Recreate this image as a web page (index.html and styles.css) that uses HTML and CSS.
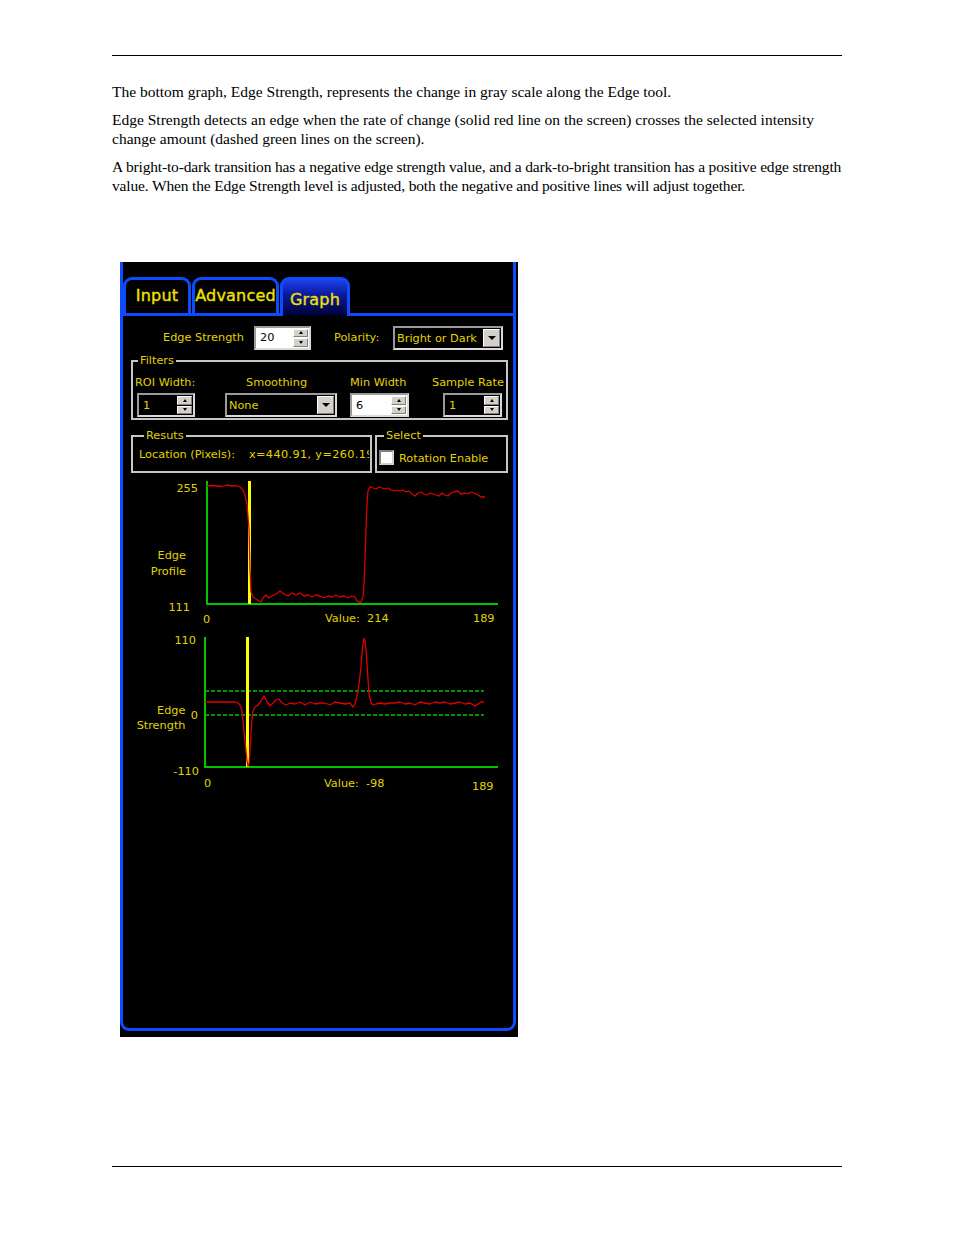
FILE: index.html
```html
<!DOCTYPE html>
<html>
<head>
<meta charset="utf-8">
<title>Edge Strength</title>
<link rel="stylesheet" href="styles.css">
</head>
<body>
<div class="page">
  <div class="rule top"></div>
  <div class="text">
    <p>The bottom graph, Edge Strength, represents the change in gray scale along the Edge tool.</p>
    <p>Edge Strength detects an edge when the rate of change (solid red line on the screen) crosses the selected intensity<br>change amount (dashed green lines on the screen).</p>
    <p class="tight">A bright-to-dark transition has a negative edge strength value, and a dark-to-bright transition has a positive edge strength<br>value. When the Edge Strength level is adjusted, both the negative and positive lines will adjust together.</p>
  </div>

  <div class="panel">
    <div class="frame">
      <div class="tabs">
        <div class="tab t-input">Input</div>
        <div class="tab t-adv">Advanced</div>
        <div class="tab t-graph">Graph</div>
      </div>

      <div class="row1">
        <span class="lbl l-es">Edge Strength</span>
        <div class="spin white w-es"><span class="val">20</span><span class="btns"><span class="b up"></span><span class="b dn"></span></span></div>
        <span class="lbl l-pol">Polarity:</span>
        <div class="combo w-pol"><span class="val">Bright or Dark</span><span class="arrow"></span></div>
      </div>

      <fieldset class="grp filters">
        <legend>Filters</legend>
        <div class="fcols">
          <div class="fcol c1">
            <span class="lbl">ROI Width:</span>
            <div class="spin"><span class="val">1</span><span class="btns"><span class="b up"></span><span class="b dn"></span></span></div>
          </div>
          <div class="fcol c2">
            <span class="lbl">Smoothing</span>
            <div class="combo"><span class="val">None</span><span class="arrow"></span></div>
          </div>
          <div class="fcol c3">
            <span class="lbl">Min Width</span>
            <div class="spin white"><span class="val">6</span><span class="btns"><span class="b up"></span><span class="b dn"></span></span></div>
          </div>
          <div class="fcol c4">
            <span class="lbl">Sample Rate</span>
            <div class="spin"><span class="val">1</span><span class="btns"><span class="b up"></span><span class="b dn"></span></span></div>
          </div>
        </div>
      </fieldset>

      <div class="row3">
        <fieldset class="grp results">
          <legend>Resuts</legend>
          <div class="loc"><span class="loc-l">Location (Pixels):</span><span class="loc-v">x=440.91, y=260.19</span></div>
        </fieldset>
        <fieldset class="grp select">
          <legend>Select</legend>
          <div class="chk"><span class="box"></span><span>Rotation Enable</span></div>
        </fieldset>
      </div>

      <svg class="graphs" width="390" height="330" viewBox="123 476 390 330" xmlns="http://www.w3.org/2000/svg">
        <!-- Edge Profile graph -->
        <line class="axis" x1="207" y1="482" x2="207" y2="606"/>
        <line class="axis" x1="206" y1="605" x2="498" y2="605"/>
        <rect class="marker" x="248" y="482" width="3" height="123"/>
        <polyline class="curve" points="207,487 212,486.5 217,487 222,487.5 227,486 232,487 236,486.5 240,488 243,491 245,496 247,505 249,530 250,570 251,593 253,598 256,600 259,602 261,603 263,599 266,596 269,599 272,597 276,595 280,592 284,595 288,597 292,594 296,596 300,594 304,597 308,596 312,598 316,596 320,597 324,599 328,597 332,598 336,596 340,598 344,597 348,599 352,597 355,598 357,602 359,603.5 361,603 363,598 364,585 365,560 366,530 367,505 368,492 370,487.5 373,489 376,490 379,488 382,489 385,490 388,489 391,491 394,492 397,491 400,492 403,491 406,493 409,492 412,495 415,497 418,494 421,493 424,495 427,496 430,494 433,495 436,496 439,497 442,494 445,496 448,497 451,494 454,493 458,492 461,495 465,494 468,495 471,493 474,494 478,496 481,498 485,498"/>
        <text class="t" x="198" y="493" text-anchor="end">255</text>
        <text class="t" x="186" y="560" text-anchor="end">Edge</text>
        <text class="t" x="186" y="576" text-anchor="end">Profile</text>
        <text class="t" x="190" y="612" text-anchor="end">111</text>
        <text class="t" x="203" y="624">0</text>
        <text class="t pre" x="325" y="623">Value:  214</text>
        <text class="t" x="473" y="623">189</text>

        <!-- Edge Strength graph -->
        <line class="axis" x1="205" y1="638" x2="205" y2="769"/>
        <line class="axis" x1="204" y1="768" x2="498" y2="768"/>
        <line class="dash" x1="205" y1="692" x2="484" y2="692"/>
        <line class="dash" x1="205" y1="716" x2="484" y2="716"/>
        <rect class="marker" x="246" y="638" width="3" height="130"/>
        <polyline class="curve" points="205,703 215,703 225,703 235,703 238,704 240,706 242,712 243,722 244,732 245,742 246,752 247,762 248,767 249,765 250,752 251,735 252,720 253,712 255,708 258,706 261,702 264,697 267,703 270,707 273,704 276,701 279,700 282,704 286,706 290,704 295,705 300,703 305,706 310,703 315,705 320,704 325,704 330,706 335,703 340,704 345,705 350,704 353,708 355,705 357,697 359,685 361,668 362,655 363,645 364,639.5 365,641 366,650 367,665 368,680 369,695 371,704 373,706 376,705 380,704 385,705 390,704 395,704 400,703 405,705 410,704 415,706 420,703 425,704 430,705 435,703 440,704 445,703 450,705 455,704 460,703 465,705 470,704 475,707 478,705 481,703 484,703"/>
        <text class="t" x="196" y="645" text-anchor="end">110</text>
        <text class="t" x="185.5" y="715" text-anchor="end">Edge</text>
        <text class="t" x="185.5" y="730" text-anchor="end">Strength</text>
        <text class="t" x="198" y="720" text-anchor="end">0</text>
        <text class="t" x="199" y="776" text-anchor="end">-110</text>
        <text class="t" x="204" y="788">0</text>
        <text class="t pre" x="324" y="788">Value:  -98</text>
        <text class="t" x="472" y="791">189</text>
      </svg>
    </div>
  </div>

  <div class="rule bottom"></div>
</div>
</body>
</html>
```

FILE: styles.css
```css
* { box-sizing: border-box; }

body {
  margin: 0;
  background: #ffffff;
}

.page {
  width: 954px;
}

.rule {
  height: 1px;
  width: 730px;
  margin-left: 112px;
  background: #000000;
}
.rule.top { margin-top: 55px; }
.rule.bottom { margin-top: 129px; }

.text {
  margin-left: 112px;
  width: 780px;
  padding-top: 26px;
  font-family: "Liberation Serif", "Times New Roman", serif;
  font-size: 15.5px;
  line-height: 19px;
  color: #000000;
}
.text p { margin: 0 0 9px; }
.text p:last-child { margin-bottom: 0; }
.text p.first { letter-spacing: 0.05px; }
.text p.tight { letter-spacing: -0.16px; }

/* ---------- panel ---------- */
.panel {
  margin-left: 120px;
  margin-top: 67px;
  width: 398px;
  height: 775px;
  background: #000000;
  font-family: "DejaVu Sans", "Liberation Sans", sans-serif;
  font-size: 11.3px;
  color: #e0d400;
}

.frame {
  width: 396px;
  height: 769px;
  border-left: 3px solid #0c4cfc;
  border-right: 3px solid #0c4cfc;
  border-bottom: 3px solid #0c4cfc;
  border-radius: 0 0 9px 9px;
  display: flex;
  flex-direction: column;
}

.tabs {
  display: flex;
  align-items: flex-end;
  height: 54px;
  border-bottom: 3px solid #0c4cfc;
}

.tab {
  height: 36px;
  border: 3px solid #0c4cfc;
  border-bottom: 0;
  border-radius: 9px 9px 0 0;
  background: #000000;
  display: flex;
  align-items: center;
  justify-content: center;
  font-size: 16px;
  color: #f0e200;
  -webkit-text-stroke: 0.35px #f0e200;
  letter-spacing: 0.2px;
}
.t-input { width: 68px; padding-bottom: 2px; }
.t-adv { width: 87px; margin-left: 1px; padding-bottom: 2px; }
.t-graph {
  width: 70px;
  margin-left: 1px;
  height: 39px;
  margin-bottom: -3px;
  padding-top: 3px;
  background: linear-gradient(#1e40e8 0%, #0a1aa0 40%, #000030 100%);
}

.lbl {
  line-height: 14px;
  white-space: nowrap;
}

/* row 1 */
.row1 {
  display: flex;
  align-items: center;
  height: 25px;
  margin-top: 9px;
}
.l-es { width: 91px; margin-left: 40px; }
.w-es { width: 57px; height: 22px; }
.l-pol { width: 82px; padding-left: 23px; }
.w-pol { width: 110px; height: 25px; }

/* spin box */
.spin {
  display: flex;
  align-items: stretch;
  height: 24px;
  border: 2px solid;
  border-color: #9a9a9a #dadada #dadada #9a9a9a;
  background: #000000;
  color: #e0d400;
}
.spin.white {
  background: #ffffff;
  color: #000000;
}
.spin .val {
  flex: 1;
  padding-left: 4px;
  display: flex;
  align-items: center;
}
.btns {
  width: 16px;
  display: flex;
  flex-direction: column;
  gap: 1px;
  padding: 1px 1px 1px 0;
}
.b {
  flex: 1;
  background: #d4d0c8;
  border: 1px solid;
  border-color: #ffffff #808080 #808080 #ffffff;
  display: flex;
  align-items: center;
  justify-content: center;
}
.b::after {
  content: "";
  width: 0;
  height: 0;
  border-left: 2.5px solid transparent;
  border-right: 2.5px solid transparent;
}
.b.up::after { border-bottom: 3px solid #000000; }
.b.dn::after { border-top: 3px solid #000000; }

/* combo box */
.combo {
  display: flex;
  align-items: stretch;
  height: 24px;
  border: 2px solid;
  border-color: #9a9a9a #dadada #dadada #9a9a9a;
  background: #000000;
  color: #e0d400;
}
.combo .val {
  flex: 1;
  padding-left: 2px;
  padding-top: 1px;
  display: flex;
  align-items: center;
  white-space: nowrap;
}
.arrow {
  width: 17px;
  margin: 1px;
  background: #d4d0c8;
  border: 1px solid;
  border-color: #ffffff #808080 #808080 #ffffff;
  display: flex;
  align-items: center;
  justify-content: center;
}
.arrow::after {
  content: "";
  width: 0;
  height: 0;
  border-left: 4px solid transparent;
  border-right: 4px solid transparent;
  border-top: 4px solid #000000;
}

/* group boxes */
.grp {
  margin: 0;
  padding: 0;
  min-width: 0;
  border: 2px solid #c6c6c6;
}
.grp legend {
  padding: 0 2px;
  margin-left: 5px;
  line-height: 14px;
  font-size: 11.3px;
}

.filters {
  margin-top: 4px;
  margin-left: 8px;
  width: 377px;
  padding: 8px 0 1px;
}
.fcols { display: flex; }
.fcol {
  display: flex;
  flex-direction: column;
  gap: 3px;
}
.c1 { margin-left: 2px; width: 66px; }
.c1 .spin { margin-left: 2px; width: 58px; }
.c2 { margin-left: 24px; width: 112px; }
.c2 .lbl { padding-left: 21px; }
.c2 .combo { width: 112px; }
.c3 { margin-left: 13px; width: 59px; }
.c3 .spin { width: 59px; }
.c4 { margin-left: 23px; width: 72px; }
.c4 .spin { margin-left: 11px; width: 59px; }

.row3 {
  display: flex;
  gap: 3px;
  margin-top: 9px;
  margin-left: 8px;
}
.results {
  width: 241px;
  padding: 5px 1px 9px 6px;
}
.loc {
  display: flex;
  line-height: 14px;
  white-space: nowrap;
  overflow: hidden;
}
.loc-l { width: 110px; flex: none; }
.loc-v { flex: none; letter-spacing: 0.35px; }

.select {
  width: 133px;
  padding: 7px 0 6px 2px;
}
.chk {
  display: flex;
  align-items: center;
  gap: 5px;
  height: 15px;
  white-space: nowrap;
  padding-top: 1px;
}
.box {
  width: 15px;
  height: 15px;
  flex: none;
  background: #ffffff;
  border: 2px solid;
  border-color: #808080 #d4d0c8 #d4d0c8 #808080;
  margin-top: -1px;
}

/* graphs */
.graphs {
  display: block;
  margin-top: 2px;
}
.axis {
  stroke: #00c400;
  stroke-width: 2;
}
.dash {
  stroke: #00c400;
  stroke-width: 1.3;
  stroke-dasharray: 4 2;
}
.marker { fill: #ffff00; }
.curve {
  fill: none;
  stroke: #dc0000;
  stroke-width: 1.3;
  stroke-linejoin: round;
}
.t {
  font-family: "DejaVu Sans", "Liberation Sans", sans-serif;
  font-size: 11.3px;
  fill: #e0d400;
}
.pre { white-space: pre; }
```
